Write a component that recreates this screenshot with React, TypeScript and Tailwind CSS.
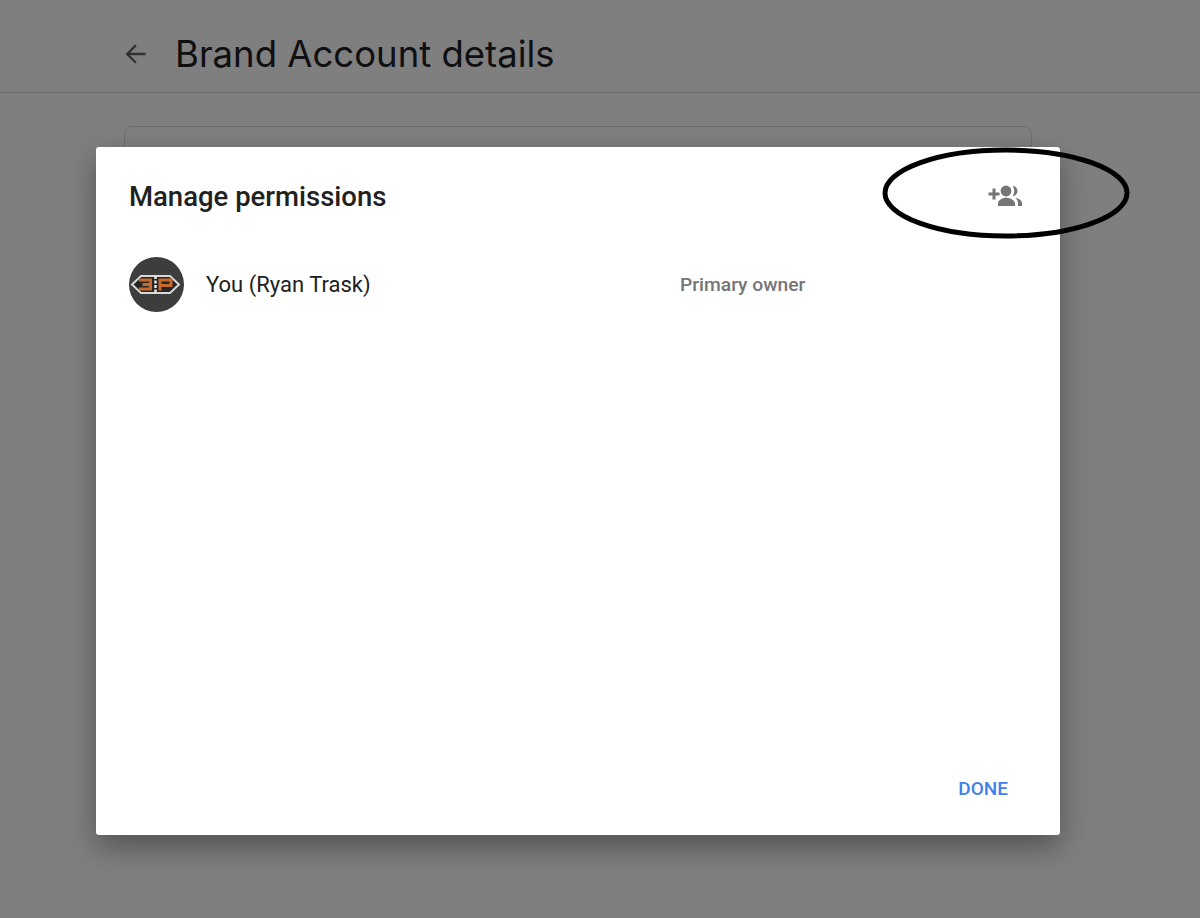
import React from 'react';

function BackArrow() {
  return (
    <svg width="24" height="24" viewBox="0 0 24 24" className="fill-[#5f6368]">
      <path d="M21.500 10.800H6l6.800-6.800L11.100 2.400 1.500 12l9.600 9.600 1.700-1.600L6 13.200h15.500z" />
    </svg>
  );
}

function AddPeople() {
  return (
    <svg width="36" height="24" viewBox="0 0 36 24" className="mb-[6px] fill-[#757575]">
      <path d="M6.500 6.500h3v4h4v3h-4v4h-3v-4h-4v-3h4z" />
      <circle cx="20" cy="9" r="5.400" />
      <path d="M12 24v-2.500c0-3.600 5-5.700 8-5.700s9 2.100 9 5.700V24z" />
      <path d="M26.500 3.800c2.800.2 5 2.500 5 5.200s-2.200 5-5 5.200c1.100-1.400 1.700-3.200 1.700-5.200s-.6-3.800-1.700-5.200z" />
      <path d="M29.500 16c3.200.6 6.500 2.300 6.500 5v3h-4v-2.500c0-2.100-1-4-2.500-5.500z" />
    </svg>
  );
}

function Avatar() {
  return (
    <svg width="55" height="55" viewBox="0 0 55 55">
      <circle cx="27.500" cy="27.500" r="27.500" fill="#3d3d3d" />
      <path d="M3 27.500 12 19h29l9 8.500-9 8.500H12z" fill="#262626" stroke="#d8d8d8" strokeWidth="2" />
      <path d="M10 23h11.500v9H10M13.500 27.500h8" fill="none" stroke="#c8692c" strokeWidth="3" />
      <path d="M31 33.500V23h11v5.500H31" fill="none" stroke="#c8692c" strokeWidth="3" />
      <path d="M26.500 19v17" stroke="#e8e8e8" strokeWidth="2.500" strokeDasharray="3 1.500" />
    </svg>
  );
}

export default function App() {
  return (
    <div className="relative h-[918px] w-[1200px] overflow-hidden bg-white font-['Roboto',sans-serif]">
      {/* page behind the dialog */}
      <header className="flex h-[93px] items-center border-b border-[#dadce0] pl-[124px] pt-[15px]">
        <BackArrow />
        <h1 className="ml-[27px] pt-[2px] font-['Inter',sans-serif] text-[36.500px] leading-none text-[#202124]">Brand Account details</h1>
      </header>
      <div className="ml-[124px] mt-[33px] h-[300px] w-[908px] rounded-lg border border-[#dadce0]" />

      {/* scrim + dialog */}
      <div className="absolute inset-0 bg-black/50 pl-[96px] pt-[147px]">
        <div className="flex h-[688px] w-[964px] flex-col rounded-[3px] bg-white pl-[33px] shadow-[0_12px_30px_rgba(0,0,0,0.35)]">
          <div className="flex h-[110px] items-center justify-between pb-[10px] pr-[38px]">
            <h2 className="text-[27.500px] font-medium text-[#212121]">Manage permissions</h2>
            <AddPeople />
          </div>
          <div className="flex items-center">
            <Avatar />
            <span className="ml-[22px] w-[474px] text-[22px] text-[#212121]">You (Ryan Trask)</span>
            <span className="pt-[2px] text-[19.250px] font-medium text-[#757575]">Primary owner</span>
          </div>
          <div className="mt-auto flex justify-end pb-[32px] pr-[52px]">
            <button className="text-[19px] font-medium text-[#4280e8]">DONE</button>
          </div>
        </div>
      </div>

      {/* hand-drawn annotation */}
      <svg className="absolute left-[880px] top-[144px]" width="252" height="98" viewBox="0 0 252 98">
        <ellipse cx="126" cy="49" rx="121" ry="43" fill="none" stroke="#000" strokeWidth="5" />
      </svg>
    </div>
  );
}
